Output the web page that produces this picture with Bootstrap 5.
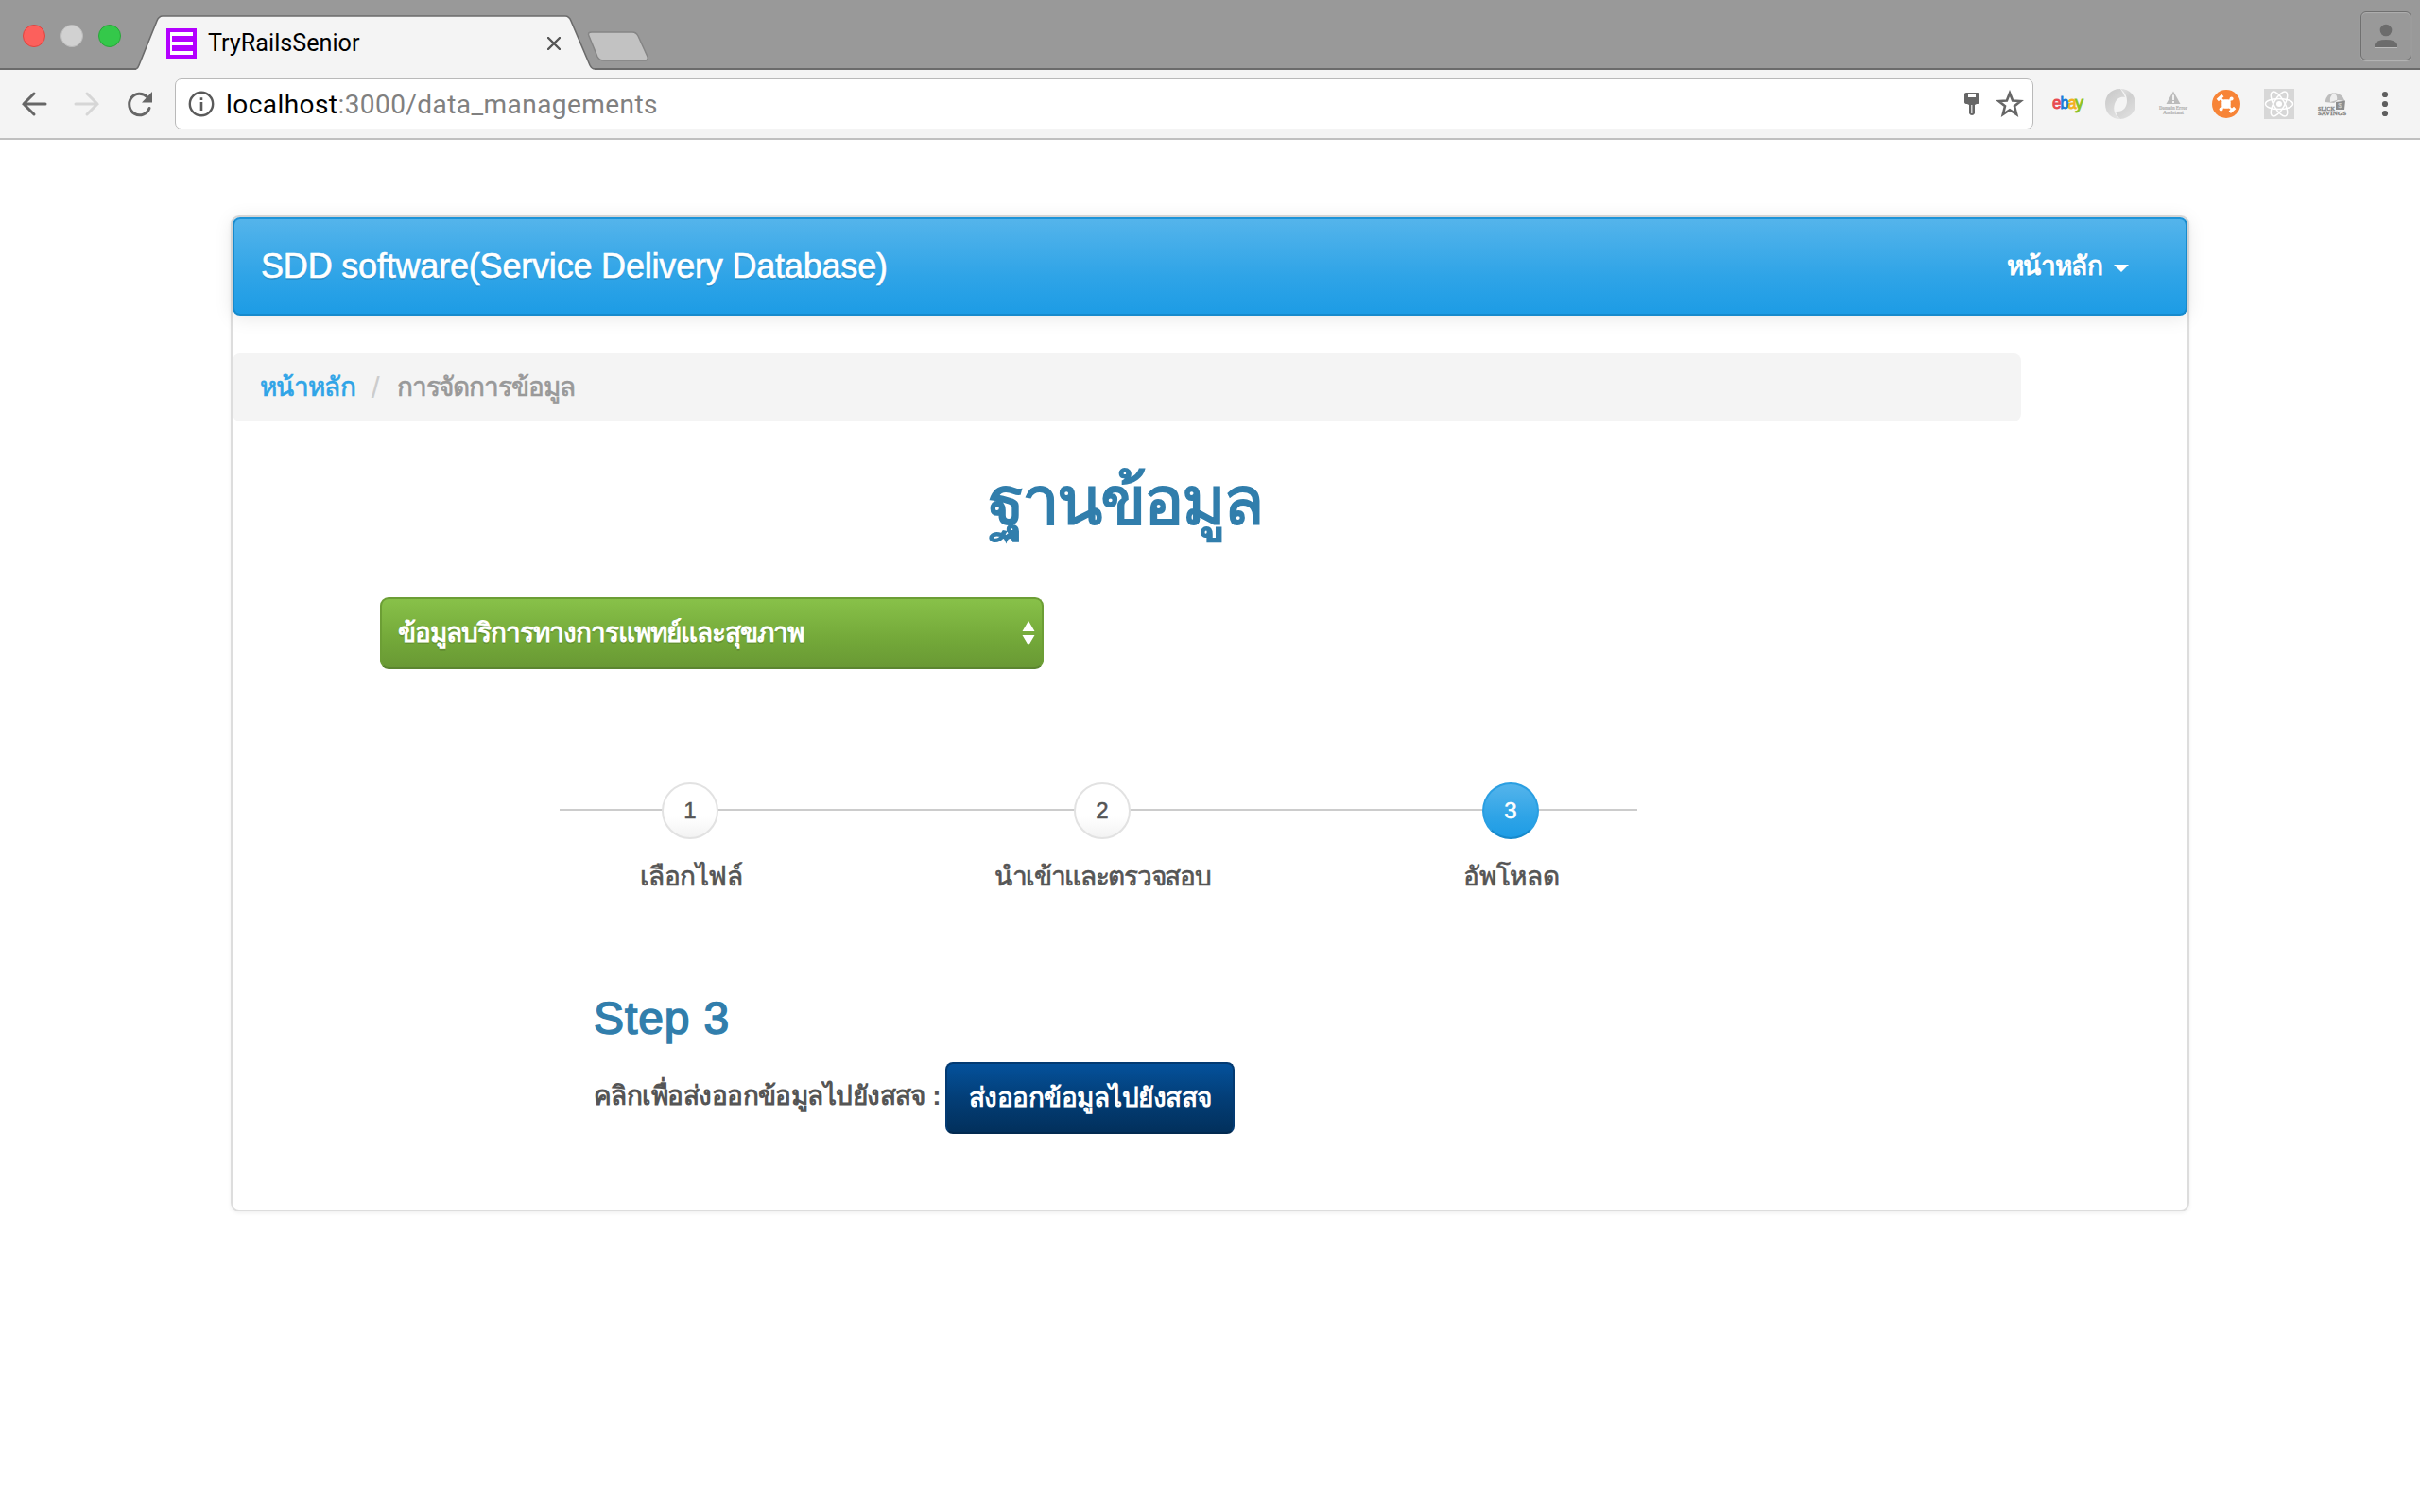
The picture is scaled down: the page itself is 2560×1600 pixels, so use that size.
<!DOCTYPE html>
<html lang="th">
<head>
<meta charset="utf-8">
<meta name="viewport" content="width=device-width, initial-scale=1">
<title>TryRailsSenior</title>
<link href="https://cdn.jsdelivr.net/npm/bootstrap@5.3.0/dist/css/bootstrap.min.css" rel="stylesheet">
<style>
body{width:2560px;height:1600px;overflow:hidden;background:#fff;color:#555;font:28px/40px "Liberation Sans",sans-serif;white-space:nowrap}
svg{display:block;flex:none}
.tabstrip{height:74px;background:#999;border-bottom:2px solid #6b6b6b}
.lights{gap:16px;padding:26px 0 0 24px;width:144px}
.light{width:24px;height:24px;border-radius:50%;border:1px solid}
.l-red{background:#fc605c;border-color:#e0443f}
.l-grey{background:#d1d1d1;border-color:#bcbcbc}
.l-green{background:#34c84a;border-color:#2aa53a}
.chrome-tab{width:485px;height:74px;padding:0 36px 0 32px}
.tab-bg{position:absolute;left:0;top:0}
.favicon{margin-top:30px}
.tab-title{font:25.2px/28px Roboto,sans-serif;color:#000;margin:32px 0 0 12px}
.tab-close{margin-top:39px}
.new-tab{margin:32px 0 0 -8px}
.profile-btn{width:54px;height:52px;border:1.5px solid #707070;border-radius:6px;margin:12px 9px 0 0;box-shadow:0 1px 1px #b5b5b5,inset 0 1px 1px #b0b0b0}
.toolbar{height:74px;background:#f4f4f4;border-bottom:2px solid #c0c0c0}
.nav-icons{width:185px;padding-left:20px;gap:24px}
.nav-icons svg:last-child{margin-left:1px}
.omnibox{width:1966px;height:54px;margin-top:-1px;background:#fff;border:1.5px solid #b9b9b9;border-radius:7px;padding:0 9px 0 13px}
.url{font:28px/52px Roboto,sans-serif;letter-spacing:.44px;color:#808080;margin:2px 0 0 12px}
.url b{font-weight:400;color:#000}
.extensions{padding-left:19px}
.page{padding-top:80px}
.panel{width:2072px;height:1054px;margin:0 auto 0 244px;border:2px solid #ddd;border-radius:9px;box-shadow:0 2px 4px rgba(0,0,0,.06);background:#fff}
.mainbar{height:104px;border:2px solid #178acc;border-top-color:#1c93d8;border-radius:8px;padding:0 60px 0 28px;background:linear-gradient(#54b4eb,#2fa4e7 60%,#1d9ce5);box-shadow:0 2px 20px rgba(0,0,0,.1);flex-wrap:nowrap}
.mainbar .navbar-brand{font-size:36px;line-height:40px;letter-spacing:-.19px;color:#fff;padding:0;margin:0;-webkit-text-stroke:.6px #fff;text-shadow:0 2px 0 rgba(0,0,0,.12)}
.mainbar .nav-link{color:#fff;padding:0;font-size:28px;letter-spacing:-.7px;-webkit-text-stroke:1px #fff;text-shadow:0 2px 0 rgba(0,0,0,.1)}
.caret{width:0;height:0;border:8px solid transparent;border-top-color:#fff;border-bottom:0;margin-left:12px;margin-top:4px}
.crumbs{width:1892px;height:72px;margin:40px 0 0;background:#f4f4f4;border-radius:8px;padding:0 29px;-webkit-text-stroke:.7px}
.crumbs a{color:#2fa4e7;text-decoration:none;letter-spacing:-.7px}
.crumbs .sep{color:#ccc;margin:0 18px 0 17px;-webkit-text-stroke:0;font-size:32px}
.crumbs .here{color:#999;letter-spacing:-1.1px}
.headline{font-size:71px;line-height:80px;font-weight:400;letter-spacing:-3px;color:#317eac;-webkit-text-stroke:1.8px;width:1892px;margin:45px 0 61px;padding-right:4px;text-align:center}
.dataset{width:702px;height:76px;margin-left:156px;border:2px solid #6c9e35;border-bottom-color:#5b8530;border-radius:9px;background:linear-gradient(#88c149,#73a839 60%,#699934);color:#fff;font-weight:700;letter-spacing:-1px;padding:0 7px 0 17px;text-shadow:0 2px 0 rgba(0,0,0,.12)}
.steps{width:1140px;margin:120px 0 0 346px;background:linear-gradient(#ccc,#ccc) 0 28px/100% 2px no-repeat}
.s1{width:276px}.s2{width:596px}.s3{width:268px}
.dot{width:60px;height:60px;border-radius:50%;border:2px solid #e2e2e2;background:linear-gradient(#fff,#fff 60%,#f3f3f3);font-size:24px;-webkit-text-stroke:.5px}
.dot.on{border-color:#2a9fe2 #2a9fe2 #178acc;background:linear-gradient(#54b4eb,#2fa4e7 60%,#1d9ce5);color:#fff}
.cap-text{margin-top:20px;letter-spacing:-.5px;padding-left:2px;-webkit-text-stroke:.7px}
.s2 .cap-text{letter-spacing:-1.3px;padding-left:0}
.s3 .cap-text{letter-spacing:-.3px}
.step-body{margin:100px 0 0 382px}
.step-title{font-size:48px;line-height:60px;font-weight:400;color:#317eac;-webkit-text-stroke:1.6px;letter-spacing:.9px;margin:0 0 16px}
.send-label{font-weight:700;letter-spacing:-.55px;width:372px;margin-top:-4px}
.btn.send{height:76px;width:306px;padding:0;border:2px solid #033a72;border-bottom-color:#022a50;border-radius:8px;background:linear-gradient(#04519b,#033e77 50%,#02305c);color:#fff;font-size:28px;line-height:72px;font-weight:700;letter-spacing:-.5px}
</style>
</head>
<body>
<header>
  <div class="tabstrip d-flex">
    <div class="lights d-flex"><i class="light l-red"></i><i class="light l-grey"></i><i class="light l-green"></i></div>
    <div class="chrome-tab position-relative">
      <svg class="tab-bg" width="485" height="74" viewBox="0 0 485 74"><path d="M0 74V73Q2 72 3 69L22 22Q24 17 28 17H454Q458 17 460 22L480 69Q482 73 485 73V74Z" fill="#f4f4f4"/><path d="M0 73Q2 72 3 69L22 22Q24 17 28 17H454Q458 17 460 22L480 69Q482 73 485 73" fill="none" stroke="#6b6b6b" stroke-width="1.6"/></svg>
      <div class="position-relative d-flex align-items-start">
        <svg class="favicon" width="32" height="32" viewBox="0 0 32 32"><path fill="#b300ff" d="M0 0H32V32H0Z"/><path fill="#fff" d="M4 4H28V8H4ZM4 14H28V18H4ZM4 24H28V28H4ZM4 4H6V28H4Z"/></svg>
        <span class="tab-title">TryRailsSenior</span>
        <svg class="tab-close ms-auto" width="14" height="14" viewBox="0 0 14 14"><path d="M1 1L13 13M13 1L1 13" stroke="#555" stroke-width="2.4" stroke-linecap="round"/></svg>
      </div>
    </div>
    <svg class="new-tab" width="66" height="34" viewBox="0 0 66 34"><path d="M5 2H48Q52 2 54 6L64 28Q65 32 61 32H18Q13 32 11 28L2 6Q0 2 5 2Z" fill="#c2c2c2" stroke="#858585" stroke-width="1.5"/></svg>
    <div class="profile-btn ms-auto d-flex justify-content-center pt-1"><svg width="26" height="34" viewBox="0 0 26 34"><circle cx="13" cy="15" r="6.3" fill="#6c6c6c"/><path d="M1 33V30Q3 25 13 25T25 30V33Z" fill="#6c6c6c"/><path d="M1 33.500H25" stroke="#bbb" stroke-width="1"/></svg></div>
  </div>
  <div class="toolbar d-flex align-items-center">
    <div class="nav-icons d-flex align-items-center">
      <svg width="32" height="30" viewBox="0 0 32 30"><path d="M28 15H5M16 4L5 15L16 26" fill="none" stroke="#666" stroke-width="3" stroke-linecap="round"/></svg>
      <svg width="32" height="30" viewBox="0 0 32 30"><path d="M4 15H27M16 4L27 15L16 26" fill="none" stroke="#d6d6d6" stroke-width="3" stroke-linecap="round"/></svg>
      <svg width="30" height="30" viewBox="0 0 30 30"><path d="M25 19.5A11 11.3 0 1 1 22.5 7.5" fill="none" stroke="#666" stroke-width="3" stroke-linecap="round"/><path d="M28 2V13.5H17Z" fill="#666"/></svg>
    </div>
    <div class="omnibox d-flex align-items-center">
      <svg width="28" height="28" viewBox="0 0 28 28"><circle cx="14" cy="14" r="12.2" fill="none" stroke="#5a5a5a" stroke-width="2.4"/><path d="M12.7 12H15.3V21H12.7ZM12.7 7.3H15.3V10H12.7Z" fill="#5a5a5a"/></svg>
      <span class="url"><b>localhost</b>:3000/data_managements</span>
      <svg class="ms-auto" width="16" height="26" viewBox="0 0 16 26"><path fill-rule="evenodd" d="M2 1H14Q16 1 16 3V11Q16 13 13 13L11 14V23Q10 25 8 25T5 23V14L3 13Q0 13 0 11V3Q0 1 2 1ZM4 3V6H12V3Z" fill="#666"/><path d="M7.8 14V23" stroke="#eee" stroke-width="1.2"/></svg>
      <svg style="margin-left:17px" width="30" height="30" viewBox="0 0 30 30"><path d="M15 3.5L18.1 11.5L26.6 12L20 17.3L22.2 26L15 21.2L7.8 26L10 17.3L3.4 12L11.9 11.5Z" fill="none" stroke="#666" stroke-width="2.6"/></svg>
    </div>
    <div class="extensions d-flex align-items-center">
      <svg width="36" height="32" viewBox="0 0 36 32"><g font-family="Liberation Sans" font-size="18" font-weight="400" stroke-width=".9"><text x="1" y="21" textLength="9.500" lengthAdjust="spacingAndGlyphs" fill="#e84a4f" stroke="#e84a4f">e</text><text x="9.500" y="21" textLength="9" lengthAdjust="spacingAndGlyphs" fill="#1b7bd8" stroke="#1b7bd8">b</text><text x="17.500" y="21" textLength="9" lengthAdjust="spacingAndGlyphs" fill="#f4b11d" stroke="#f4b11d">a</text><text x="25" y="21" textLength="9" lengthAdjust="spacingAndGlyphs" fill="#8cc21f" stroke="#8cc21f">y</text></g></svg>
      <svg style="margin-left:20px" width="34" height="34" viewBox="0 0 34 34"><defs><linearGradient id="ra" x1="0" y1="0" x2=".6" y2="1"><stop stop-color="#c6c6c6"/><stop offset="1" stop-color="#e2e2e2"/></linearGradient><linearGradient id="rb" x1="0" y1="0" x2=".6" y2="1"><stop stop-color="#e6e6e6"/><stop offset=".5" stop-color="#cfcfcf"/><stop offset="1" stop-color="#dedede"/></linearGradient></defs><path d="M17 1C6 1 1 9 1 17C1 27 8 33 17 33C11 29 9 23 11 17C13 11 17 9 22 10Q20 5 17 1Z" fill="url(#ra)"/><path d="M17 1C27 1 33 8 33 17C33 26 27 32 17 33Q14 31 12 25C20 26 24 20 24 14C24 8 21 4 17 1Z" fill="url(#rb)"/></svg>
      <svg style="margin-left:23px" width="32" height="32" viewBox="0 0 32 32"><path d="M16 2.5L23.5 16H8.5Z" fill="#bbb"/><path d="M16 6.5V12M16 13V15" stroke="#f4f4f4" stroke-width="1.9"/><g font-family="Liberation Serif" font-weight="700" font-size="5.8" fill="#b4b4b4" stroke="#b4b4b4" stroke-width=".2"><text x="1" y="21.5" textLength="30" lengthAdjust="spacingAndGlyphs">Domain Error</text><text x="5" y="27" textLength="22" lengthAdjust="spacingAndGlyphs">Assistant</text></g></svg>
      <svg style="margin-left:24px" width="32" height="32" viewBox="0 0 32 32"><circle cx="16" cy="16" r="15" fill="#f78437"/><rect x="11.3" y="11.3" width="9.4" height="9.4" rx="3" fill="#fff"/><path d="M10 10L22 22M22 10L10 22" stroke="#fff" stroke-width="1.8"/><circle cx="21.6" cy="10.6" r="2" fill="#fff"/><circle cx="10.6" cy="21.6" r="2" fill="#fff"/><path d="M6.8 12L12.3 7M19.8 24.8L25.2 20" stroke="#fff" stroke-width="3.4"/></svg>
      <svg style="margin-left:24px" width="32" height="32" viewBox="0 0 32 32"><path d="M0 0H32V32H0Z" fill="#d7d7d7"/><g fill="none" stroke="#fff" stroke-width="1.5"><ellipse cx="16" cy="16" rx="14.5" ry="5.6"/><ellipse cx="16" cy="16" rx="14.5" ry="5.6" transform="rotate(60 16 16)"/><ellipse cx="16" cy="16" rx="14.5" ry="5.6" transform="rotate(120 16 16)"/></g><circle cx="16" cy="16" r="3" fill="#fff"/></svg>
      <svg style="margin-left:24px" width="32" height="32" viewBox="0 0 32 32"><path d="M8.500 14Q10 5 18 4Q27 5 29.500 13L22 12L18 15Z" fill="#bdbdbd"/><path d="M18 4Q13 8 14 14L21 12Q22 7 18 4Z" fill="#eee"/><path d="M20 14L30 12.500L29 22H20Z" fill="#8d8d8d"/><text x="22.300" y="20" font-family="Liberation Sans" font-size="7" fill="#ddd">$</text><g font-family="Liberation Serif" font-weight="700" font-size="7" fill="#858585" stroke="#858585" stroke-width=".3"><text x="1" y="22.500" textLength="18" lengthAdjust="spacingAndGlyphs">SLICK</text><text x="1" y="28" textLength="30" lengthAdjust="spacingAndGlyphs">SAVINGS</text></g></svg>
      <svg style="margin-left:36px" width="8" height="28" viewBox="0 0 8 28"><g fill="#5e5e5e"><circle cx="4" cy="4" r="3.1"/><circle cx="4" cy="14" r="3.1"/><circle cx="4" cy="24" r="3.1"/></g></svg>
    </div>
  </div>
</header>
<main class="page">
  <div class="panel">
    <nav class="navbar mainbar d-flex align-items-center justify-content-between">
      <a class="navbar-brand" href="#">SDD software(Service Delivery Database)</a>
      <a class="nav-link d-flex align-items-center" href="#">หน้าหลัก<i class="caret"></i></a>
    </nav>
    <nav class="crumbs d-flex align-items-center"><a href="#">หน้าหลัก</a><span class="sep">/</span><span class="here">การจัดการข้อมูล</span></nav>
    <h1 class="headline">ฐานข้อมูล</h1>
    <div class="dataset d-flex align-items-center justify-content-between" role="button">
      <span>ข้อมูลบริการทางการแพทย์และสุขภาพ</span>
      <svg width="14" height="26" viewBox="0 0 14 26"><path d="M7 0L13.500 11H.5ZM.5 15H13.500L7 26Z" fill="#fff"/></svg>
    </div>
    <div class="steps d-flex">
      <div class="s1 d-flex flex-column align-items-center"><div class="dot d-flex align-items-center justify-content-center">1</div><div class="cap-text">เลือกไฟล์</div></div>
      <div class="s2 d-flex flex-column align-items-center"><div class="dot d-flex align-items-center justify-content-center">2</div><div class="cap-text">นำเข้าและตรวจสอบ</div></div>
      <div class="s3 d-flex flex-column align-items-center"><div class="dot on d-flex align-items-center justify-content-center">3</div><div class="cap-text">อัพโหลด</div></div>
    </div>
    <section class="step-body">
      <h3 class="step-title">Step 3</h3>
      <div class="d-flex align-items-center"><span class="send-label">คลิกเพื่อส่งออกข้อมูลไปยังสสจ :</span><button type="button" class="btn send">ส่งออกข้อมูลไปยังสสจ</button></div>
    </section>
  </div>
</main>
<script src="https://cdn.jsdelivr.net/npm/bootstrap@5.3.0/dist/js/bootstrap.bundle.min.js"></script>
</body>
</html>
